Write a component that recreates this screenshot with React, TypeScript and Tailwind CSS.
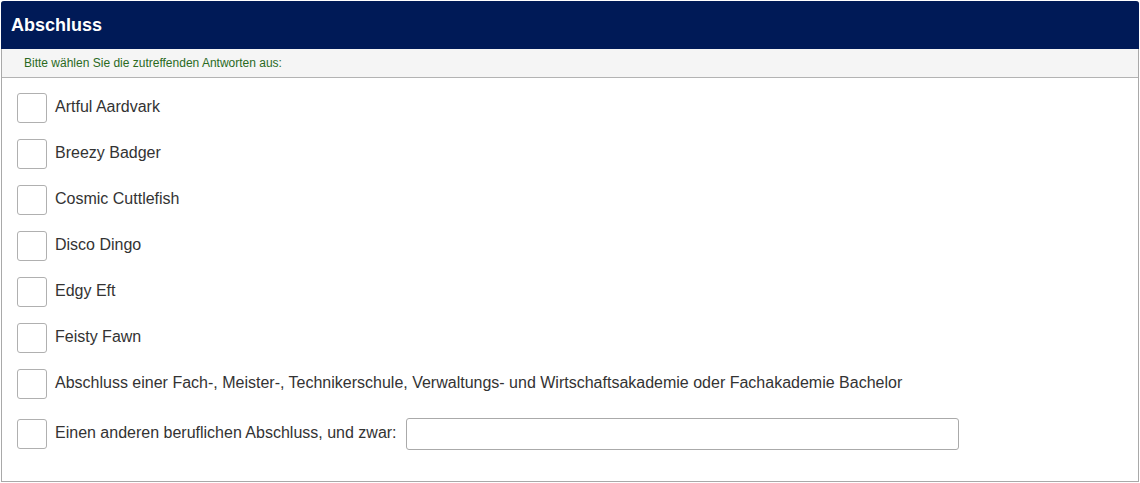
const options = [
  "Artful Aardvark",
  "Breezy Badger",
  "Cosmic Cuttlefish",
  "Disco Dingo",
  "Edgy Eft",
  "Feisty Fawn",
  "Abschluss einer Fach-, Meister-, Technikerschule, Verwaltungs- und Wirtschaftsakademie oder Fachakademie Bachelor",
];

function Box() {
  return (
    <input
      type="checkbox"
      className="appearance-none w-[30px] h-[30px] shrink-0 border border-[#b0b0b0] rounded-[3px] bg-white"
    />
  );
}

export default function App() {
  return (
    <div className="w-[1140px] h-[483px] bg-white pt-px pl-px" style={{ fontFamily: '"Liberation Sans", Arial, sans-serif' }}>
      <div className="w-[1138px] h-[481px] border-x border-b border-[#a9a9a9] rounded-t-[3px] flex flex-col">
        {/* Title bar */}
        <div className="h-[48px] bg-[#001a57] rounded-t-[3px] flex items-center pl-[10px] -mx-px">
          <h2 className="text-white text-[18px] font-bold leading-none">Abschluss</h2>
        </div>

        {/* Hint */}
        <div className="h-[29px] bg-[#f5f5f5] border-b border-[#b3b3b3] flex items-center pl-[22px]">
          <span className="text-[12px] text-[#2a6a1e]">Bitte wählen Sie die zutreffenden Antworten aus:</span>
        </div>

        {/* Answers */}
        <div className="flex flex-col gap-4 pt-[15px] pl-[15px]">
          {options.map((o) => (
            <label key={o} className="flex items-center gap-2 h-[30px]">
              <Box />
              <span className="text-[16px] leading-[18px] text-[#333] -mt-[2px]">{o}</span>
            </label>
          ))}
          <div className="flex items-center h-[32px] mt-[3px]">
            <label className="flex items-center gap-2">
              <Box />
              <span className="text-[16px] leading-[18px] text-[#333] -mt-[2px]">Einen anderen beruflichen Abschluss, und zwar:</span>
            </label>
            <input
              type="text"
              className="ml-[9px] w-[553px] h-[32px] border border-[#aaa] rounded-[3px] px-2 text-[16px] outline-none"
            />
          </div>
        </div>
      </div>
    </div>
  );
}
